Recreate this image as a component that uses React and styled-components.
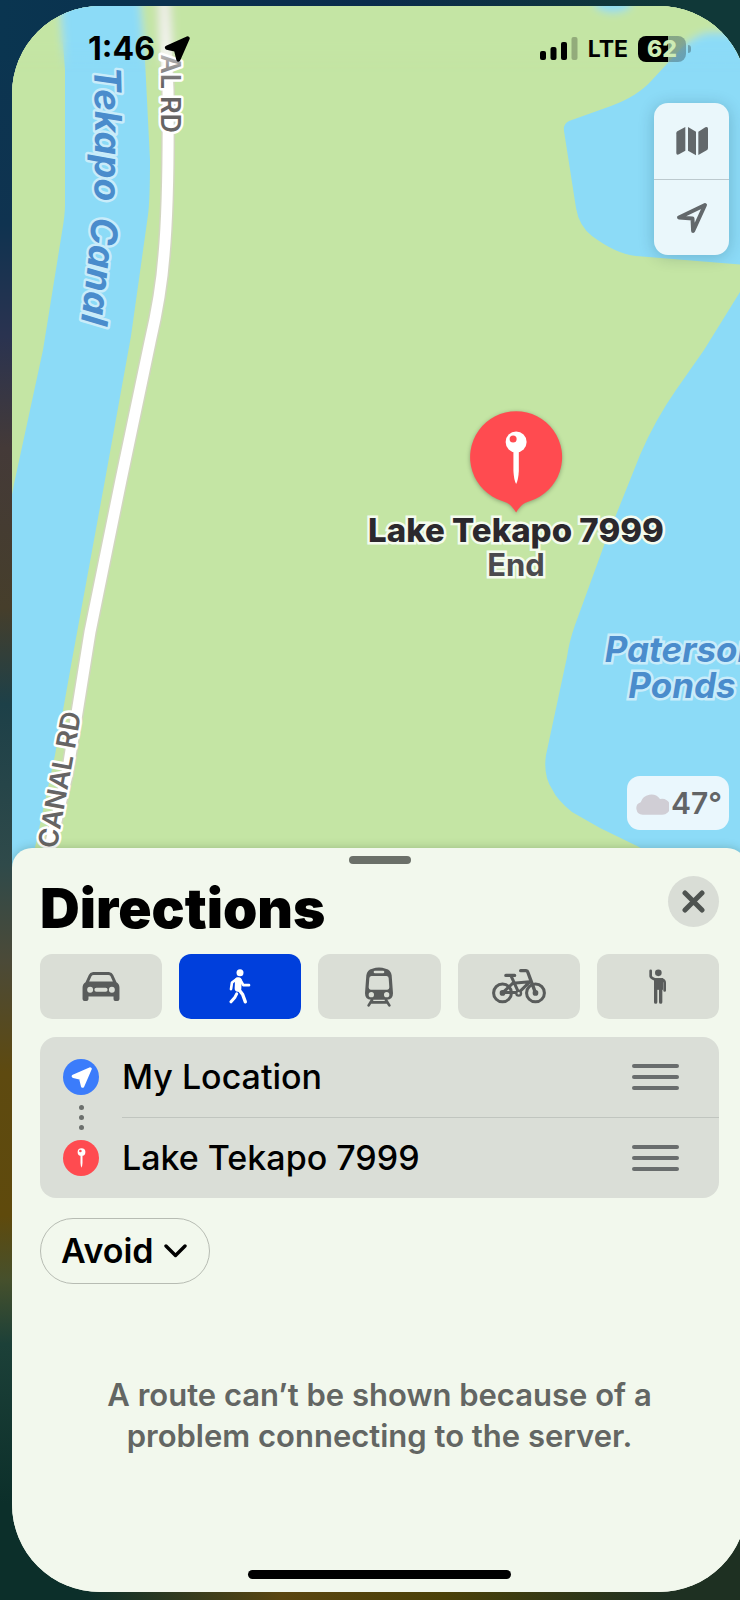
import React from "react";
import styled, { createGlobalStyle } from "styled-components";

const GlobalStyle = createGlobalStyle`
  *, *::before, *::after { box-sizing: border-box; }
  body {
    margin: 0;
    background: #0c2f2a;
    color: #000;
    font-family: Inter, "Liberation Sans", sans-serif;
  }
  button { font: inherit; color: inherit; border: 0; padding: 0; cursor: pointer; }
  h1, p, ol { margin: 0; padding: 0; }
  svg { display: block; }
`;

const Wallpaper = styled.div`
  min-height: 100vh;
  overflow: hidden;
  display: flex;
  padding: 6px 0 8px 12px;
  background:
    linear-gradient(90deg, #0a3550 0%, #0a2c4c 50%, #103838 90%) top / 100% 60px no-repeat,
    linear-gradient(90deg, #0c2f2a 12%, #5a4510 38%, #4a4008 60%, #1e3022 90%) bottom / 100% 60px no-repeat,
    linear-gradient(90deg, transparent 50%, #1e3022 50%) bottom / 100% 200px no-repeat,
    linear-gradient(90deg, transparent 50%, #103838 50%) top / 100% 200px no-repeat,
    linear-gradient(180deg, #0a3550 0%, #0f3350 14%, #2a3350 21%, #443a38 28%, #463e2b 38%,
      #1d4048 44%, #2f4a4a 54%, #4b4a38 60%, #5e4a10 67%, #5f4a0c 76%, #46502c 80%,
      #1c4038 84%, #0c2f2a 94%);
`;

const Phone = styled.main`
  flex: 1;
  min-width: 0;
  margin-right: -7px;
  display: flex;
  flex-direction: column;
  overflow: hidden;
  border-radius: 88px;
  background: #f2f8ed;
`;

const MapArea = styled.section`
  position: relative;
  flex: 1 0 500px;
  background: #c4e5a4;
  overflow: hidden;
`;

const MapDrawing = styled.svg`
  position: absolute;
  inset: 0;
  width: 100%;
  height: 100%;
`;

const WaterText = styled.text`
  font-size: 37px;
  font-style: italic;
  font-weight: 700;
  fill: #4a8ccc;
  stroke: #c9ecfa;
  stroke-width: 5px;
  stroke-linejoin: round;
  paint-order: stroke;
`;

const RoadText = styled.text`
  font-size: 27px;
  font-weight: 600;
  fill: ${(p) => (p.$faded ? "url(#label-fade)" : "#666464")};
  stroke: #fff;
  stroke-width: 5px;
  stroke-linejoin: round;
  paint-order: stroke;
`;

const StatusBar = styled.header`
  position: absolute;
  inset: 0 0 auto 0;
  padding: 27px 56px 0 76px;
  display: flex;
  justify-content: space-between;
  align-items: flex-start;
`;

const StatusGroup = styled.div`
  height: 32px;
  display: flex;
  align-items: center;
  gap: ${(p) => p.$gap}px;
`;

const Clock = styled.time`
  font-size: 32px;
  line-height: 32px;
  font-weight: 700;
`;

const Carrier = styled.span`
  font-size: 23px;
  line-height: 32px;
  font-weight: 700;
`;

const Battery = styled.div`
  width: 48px;
  height: 26px;
  border-radius: 8px;
  background: linear-gradient(90deg, #000 63%, rgba(60, 90, 100, 0.45) 63%);
  color: #cdebb4;
  font-size: 23px;
  line-height: 26px;
  font-weight: 800;
  text-align: center;
`;

const BatteryTip = styled.div`
  width: 3px;
  height: 8px;
  border-radius: 0 4px 4px 0;
  background: rgba(60, 90, 100, 0.45);
`;

const BatteryGroup = styled.div`
  display: flex;
  align-items: center;
  gap: 2px;
`;

const MapControls = styled.div`
  position: absolute;
  top: 97px;
  right: 18px;
  width: 75px;
  border-radius: 14px;
  background: #eaf7fb;
  box-shadow: 0 2px 16px rgba(0, 40, 60, 0.22);
  overflow: hidden;
`;

const MapControl = styled.button`
  width: 100%;
  height: 76px;
  display: grid;
  place-items: center;
  background: transparent;
  color: #62686b;
  & + & { border-top: 1px solid #bcc9ce; }
`;

const Weather = styled.div`
  position: absolute;
  right: 18px;
  bottom: 38px;
  width: 102px;
  height: 54px;
  padding: 0 7px 0 9px;
  display: flex;
  align-items: center;
  justify-content: space-between;
  border-radius: 13px;
  background: #eaf7fd;
  color: #626466;
  font-size: 30px;
  line-height: 36px;
  font-weight: 600;
`;

const Marker = styled.div`
  position: absolute;
  top: 405px;
  left: 504px;
  transform: translateX(-50%);
  display: flex;
  flex-direction: column;
  align-items: center;
  white-space: nowrap;
  font-weight: 800;
`;

const haloed = `
  -webkit-text-stroke: 5px #f4fbee;
  paint-order: stroke;
  stroke-linejoin: round;
`;

const MarkerTitle = styled.span`
  ${haloed}
  font-size: 33px;
  line-height: 36px;
  color: #2b282d;
`;

const MarkerNote = styled.span`
  ${haloed}
  font-size: 31px;
  line-height: 34px;
  font-weight: 700;
  color: #4b4a4d;
`;

const PondLabel = styled.p`
  position: absolute;
  top: 625px;
  left: 588px;
  width: 164px;
  text-align: center;
  font-size: 35px;
  line-height: 36px;
  font-style: italic;
  font-weight: 700;
  color: #4a8ccc;
  -webkit-text-stroke: 5px #c9ecfa;
  paint-order: stroke;
`;

const Sheet = styled.section`
  position: relative;
  margin-top: -20px;
  padding: 8px 28px 13px;
  display: flex;
  flex-direction: column;
  border-radius: 20px 20px 0 0;
  background: #f2f8ed;
  box-shadow: 0 0 10px rgba(30, 60, 30, 0.25);
`;

const Grabber = styled.div`
  align-self: center;
  width: 62px;
  height: 8px;
  border-radius: 4px;
  background: #6b7069;
`;

const SheetHeader = styled.div`
  margin-top: 12px;
  display: flex;
  justify-content: space-between;
  align-items: flex-start;
`;

const Title = styled.h1`
  font-size: 55px;
  line-height: 64px;
  font-weight: 900;
`;

const CloseButton = styled.button`
  width: 51px;
  height: 51px;
  border-radius: 50%;
  display: grid;
  place-items: center;
  background: #d9ddd6;
  color: #4e5350;
`;

const Modes = styled.div`
  margin-top: 14px;
  display: grid;
  grid-template-columns: repeat(5, 1fr);
  gap: 17px;
`;

const ModeButton = styled.button`
  height: 65px;
  border-radius: 12px;
  display: grid;
  place-items: center;
  background: ${(p) => (p.$active ? "#003fdc" : "#daded6")};
  color: ${(p) => (p.$active ? "#fff" : "#595c5b")};
`;

const StopsCard = styled.div`
  margin-top: 18px;
  padding-left: 23px;
  display: flex;
  gap: 23px;
  border-radius: 16px;
  background: #daded7;
`;

const Rail = styled.div`
  padding: 22px 0;
  display: flex;
  flex-direction: column;
  align-items: center;
  justify-content: space-between;
`;

const StopBadge = styled.span`
  width: 36px;
  height: 36px;
  border-radius: 50%;
  display: grid;
  place-items: center;
  background: ${(p) => p.$color};
`;

const Dots = styled.span`
  display: flex;
  flex-direction: column;
  gap: 5px;
`;

const Dot = styled.span`
  width: 5px;
  height: 5px;
  border-radius: 50%;
  background: #6c706d;
`;

const StopList = styled.ol`
  flex: 1;
  list-style: none;
`;

const Stop = styled.li`
  height: 80px;
  padding-right: 40px;
  display: flex;
  align-items: center;
  justify-content: space-between;
  font-size: 34px;
  line-height: 44px;
  font-weight: 500;
  & + & {
    height: 81px;
    border-top: 1px solid #c0c5bf;
  }
`;

const DragHandle = styled.button`
  width: 47px;
  display: flex;
  flex-direction: column;
  gap: 7px;
  background: transparent;
  cursor: grab;
`;

const HandleLine = styled.span`
  height: 4px;
  border-radius: 2px;
  background: #696d6d;
`;

const AvoidButton = styled.button`
  align-self: flex-start;
  margin-top: 20px;
  height: 66px;
  padding: 0 22px 0 20px;
  display: flex;
  align-items: center;
  gap: 10px;
  border: 1px solid #b7bcb3;
  border-radius: 33px;
  background: transparent;
  font-size: 34px;
  line-height: 44px;
  font-weight: 600;
`;

const Message = styled.p`
  align-self: center;
  max-width: 580px;
  margin-top: 90px;
  text-align: center;
  font-size: 31px;
  line-height: 41px;
  font-weight: 600;
  color: #636663;
`;

const HomeIndicator = styled.div`
  align-self: center;
  width: 263px;
  height: 9px;
  margin-top: 114px;
  border-radius: 5px;
  background: #000;
`;

function ArrowSolid({ size, color = "currentColor" }) {
  return (
    <svg width={size} height={size} viewBox="0 0 26 26" aria-hidden="true">
      <path
        d="M23.6 2.4 3 11.600l9 2.200 2.400 9.700z"
        fill={color}
        stroke={color}
        strokeWidth="4.2"
        strokeLinejoin="round"
      />
    </svg>
  );
}

function ArrowOutline() {
  return (
    <svg width="32" height="32" viewBox="0 0 32 32" fill="none" aria-hidden="true">
      <path
        d="M29 3 3 15.500l13.500 1 .6 12.500z"
        stroke="currentColor"
        strokeWidth="4"
        strokeLinejoin="round"
      />
    </svg>
  );
}

function MapIcon() {
  return (
    <svg width="32" height="30" viewBox="0 0 96 90" fill="currentColor" aria-hidden="true">
      <path d="M4 16 28 3v71L9 85Q1 88 1 81V22Q1 18 4 16z" />
      <path d="M36 3 60 17v71L36 74z" />
      <path d="M67 17 88 4q8-3 8 4v58q0 5-4 7L67 87z" />
    </svg>
  );
}

function SignalIcon() {
  return (
    <svg width="38" height="24" viewBox="0 0 38 24" aria-hidden="true">
      <rect x="0" y="14" width="6" height="9" rx="2" />
      <rect x="10.500" y="10" width="6" height="13" rx="2" />
      <rect x="21" y="5" width="6" height="18" rx="2" />
      <rect x="31.500" y="0" width="6" height="23" rx="2" opacity="0.25" />
    </svg>
  );
}

function CloudIcon() {
  return (
    <svg width="33" height="23" viewBox="0 0 99 69" fill="#d0ced5" aria-hidden="true">
      <path d="M20 68A19 19 0 0 1 14 31 33 33 0 0 1 72 21 24 24 0 1 1 76 68z" />
    </svg>
  );
}

function CarIcon() {
  return (
    <svg width="38" height="29" viewBox="0 0 112 88" fill="currentColor" fillRule="evenodd" aria-hidden="true">
      <path d="M9 31 19 9Q22 1 32 0H80Q90 1 93 9L103 31Q112 36 112 48V82Q112 88 106 88H99Q94 88 94 82V74H18V82Q18 88 12 88H6Q0 88 0 82V48Q0 36 9 31zM20 29H92L85 13Q83 9 78 9H34Q29 9 27 13zM23 45a9 9 0 1 0 0 18 9 9 0 0 0 0-18zM89 45a9 9 0 1 0 0 18 9 9 0 0 0 0-18zM42 48a6 6 0 0 0 0 12H70a6 6 0 0 0 0-12z" />
    </svg>
  );
}

function WalkIcon() {
  return (
    <svg
      width="22"
      height="35"
      viewBox="0 0 66 104"
      fill="none"
      stroke="currentColor"
      strokeLinecap="round"
      strokeLinejoin="round"
      aria-hidden="true"
    >
      <circle cx="33" cy="11" r="10.500" fill="currentColor" stroke="none" />
      <path d="M28 34 27 58" strokeWidth="20" />
      <path d="M24 29 9 40 6 60" strokeWidth="8" />
      <path d="M34 32 43 48H60" strokeWidth="8" />
      <path d="M29 60 41 76 49 98" strokeWidth="10" />
      <path d="M23 74 18 84 6 98" strokeWidth="9" />
    </svg>
  );
}

function TrainIcon() {
  return (
    <svg width="28" height="40" viewBox="0 0 84 118" fill="currentColor" aria-hidden="true">
      <path
        fillRule="evenodd"
        d="M22 4Q42-3 62 4 78 7 80 24L84 78Q84 97 66 97H18Q0 97 0 78L4 24Q6 7 22 4zM30 10a4 4 0 0 0 0 8H54a4 4 0 0 0 0-8zM19 26Q13 27 13 33L11 60Q11 67 17 67H67Q73 67 73 60L71 33Q71 27 65 26zM19 74a8 8 0 1 0 0 16 8 8 0 0 0 0-16zM65 74a8 8 0 1 0 0 16 8 8 0 0 0 0-16z"
      />
      <path
        d="M21 98 11 114M63 98 73 114M18 105H66"
        fill="none"
        stroke="currentColor"
        strokeWidth="8"
        strokeLinecap="round"
      />
    </svg>
  );
}

function BikeIcon() {
  return (
    <svg
      width="54"
      height="35"
      viewBox="0 0 160 104"
      fill="none"
      stroke="currentColor"
      strokeWidth="9"
      strokeLinecap="round"
      strokeLinejoin="round"
      aria-hidden="true"
    >
      <circle cx="31" cy="71" r="26.500" />
      <circle cx="129" cy="71" r="26.500" />
      <path d="M41 19H67M85 5H101Q105 5 106 9L129 71" strokeWidth="10" />
      <path d="M56 20 79 70M31 71 62 42 112 38 79 70H31" strokeWidth="9" />
      <circle cx="79" cy="72" r="7" fill="#daded6" strokeWidth="7" />
      <circle cx="31" cy="71" r="4" />
      <circle cx="129" cy="71" r="4" />
    </svg>
  );
}

function HailIcon() {
  return (
    <svg
      width="18"
      height="35"
      viewBox="0 0 54 104"
      fill="none"
      stroke="currentColor"
      strokeLinecap="round"
      strokeLinejoin="round"
      aria-hidden="true"
    >
      <circle cx="28" cy="11" r="10" fill="currentColor" stroke="none" />
      <path d="M5 5V21Q6 26 18 31H40Q47 33 47 41V64" strokeWidth="8" />
      <path d="M15 27H42V62H15z" fill="currentColor" stroke="none" />
      <path d="M20 60V99M35 60V99" strokeWidth="10" />
    </svg>
  );
}

function NeedleIcon({ width, height, dot }) {
  return (
    <svg width={width} height={height} viewBox="0 0 22 54" fill="#fff" aria-hidden="true">
      <circle cx="11" cy="11" r="10.500" />
      <circle cx="8" cy="8" r="3.500" fill={dot} />
      <path d="M8.300 20h5.400v20q-.5 9-2.700 13-2.200-4-2.700-13z" />
    </svg>
  );
}

const PinShape = styled.div`
  display: grid;
  justify-items: center;
  height: 101px;
`;

const PinBalloon = styled.svg`
  grid-area: 1 / 1;
  filter: drop-shadow(0 1px 2px rgba(0, 0, 0, 0.3));
`;

const PinGlyph = styled.div`
  grid-area: 1 / 1;
  z-index: 1;
  padding-top: 20px;
`;

function Pin() {
  return (
    <PinShape>
      <PinBalloon width="96" height="106" viewBox="0 0 96 106" aria-hidden="true">
        <path
          d="M48 101.500C45 97 42 92 34 90A46 46 0 1 1 62 90C54 92 51 97 48 101.500z"
          fill="#ff4b50"
        />
      </PinBalloon>
      <PinGlyph>
        <NeedleIcon width={22} height={54} dot="#ff4b50" />
      </PinGlyph>
    </PinShape>
  );
}

const ROAD = "M164 -10 164 0 168 90Q169 200 164 255 161 295 150 342L121 480 90 632 67 775 45 868";

function MapCanvas() {
  return (
    <MapDrawing viewBox="12 6 735 862" preserveAspectRatio="xMinYMin slice">
      <defs>
        <path id="canal-upper" d="M94 67Q96 140 94 205L90 235" />
        <path id="canal-lower" d="M92 217Q88 270 78 345" />
        <path id="road-upper" d="M161 -10 161 136" />
        <path id="road-lower" d="M53 872 60 830 82 710" />
        <linearGradient id="road-fade" gradientUnits="userSpaceOnUse" x1="0" y1="6" x2="0" y2="90">
          <stop offset="0" stopColor="#fff" stopOpacity="0.6" />
          <stop offset="1" stopColor="#fff" />
        </linearGradient>
        <linearGradient id="label-fade" gradientUnits="userSpaceOnUse" x1="0" y1="40" x2="0" y2="84">
          <stop offset="0" stopColor="#666464" stopOpacity="0.2" />
          <stop offset="1" stopColor="#666464" />
        </linearGradient>
        <linearGradient id="haze-fade" gradientUnits="userSpaceOnUse" x1="0" y1="40" x2="0" y2="72">
          <stop offset="0" stopColor="#fff" />
          <stop offset="1" stopColor="#fff" stopOpacity="0" />
        </linearGradient>
        <mask id="haze-mask" maskUnits="userSpaceOnUse" x="0" y="0" width="760" height="80">
          <rect width="760" height="80" fill="url(#haze-fade)" />
        </mask>
        <filter id="haze" filterUnits="userSpaceOnUse" x="-20" y="-40" width="800" height="160">
          <feGaussianBlur stdDeviation="4" />
        </filter>
      </defs>
      <g id="terrain">
        <rect x="-40" y="-60" width="840" height="960" fill="#c4e5a4" />
        <g fill="#8cdbf7">
          <path d="M60 -40V0L65 70 65 205Q65 215 62 232L43 350 14 484 0 560V880H28L55 755 72 660 105 480 131 336 148 215Q150 200 150 160L145 60 140 0V-40z" />
          <path d="M790 32 706 33Q690 38 678 52L652 80Q638 96 611 106L569 121Q563 124 564 131L576 208Q579 226 592 236 616 254 636 256L760 266z" />
          <path d="M760 262 740 292 704 350 676 390Q655 420 640 455L606 540 575 625Q569 642 567 657L546 755Q543 775 552 789 557 800 572 812L600 828 637 846 690 875H760z" />
          <ellipse cx="613" cy="3" rx="18" ry="9" />
        </g>
        <g fill="none">
          <path d={ROAD} stroke="#d2d6c0" strokeWidth="14" />
          <path d={ROAD} stroke="url(#road-fade)" strokeWidth="11" />
        </g>
      </g>
      <g mask="url(#haze-mask)">
        <use href="#terrain" filter="url(#haze)" />
      </g>
      <WaterText>
        <textPath href="#canal-upper">Tekapo</textPath>
      </WaterText>
      <WaterText>
        <textPath href="#canal-lower">Canal</textPath>
      </WaterText>
      <RoadText textAnchor="end" $faded>
        <textPath href="#road-upper" startOffset="98%">AL RD</textPath>
      </RoadText>
      <RoadText textAnchor="end">
        <textPath href="#road-lower" startOffset="98%">CANAL RD</textPath>
      </RoadText>
    </MapDrawing>
  );
}

const modes = [
  { label: "Drive", Icon: CarIcon },
  { label: "Walk", Icon: WalkIcon },
  { label: "Transit", Icon: TrainIcon },
  { label: "Cycle", Icon: BikeIcon },
  { label: "Ride share", Icon: HailIcon },
];

const stops = ["My Location", "Lake Tekapo 7999"];

export default function App() {
  const [mode, setMode] = React.useState("Walk");
  return (
    <>
      <GlobalStyle />
      <Wallpaper>
        <Phone>
          <MapArea>
            <MapCanvas />
            <PondLabel>
              Paterson
              <br />
              Ponds
            </PondLabel>
            <Marker>
              <Pin />
              <MarkerTitle>Lake Tekapo 7999</MarkerTitle>
              <MarkerNote>End</MarkerNote>
            </Marker>
            <StatusBar>
              <StatusGroup $gap={9}>
                <Clock>1:46</Clock>
                <ArrowSolid size={26} />
              </StatusGroup>
              <StatusGroup $gap={10}>
                <SignalIcon />
                <Carrier>LTE</Carrier>
                <BatteryGroup>
                  <Battery>62</Battery>
                  <BatteryTip />
                </BatteryGroup>
              </StatusGroup>
            </StatusBar>
            <MapControls>
              <MapControl aria-label="Map style">
                <MapIcon />
              </MapControl>
              <MapControl aria-label="Current location">
                <ArrowOutline />
              </MapControl>
            </MapControls>
            <Weather>
              <CloudIcon />
              47°
            </Weather>
          </MapArea>
          <Sheet>
            <Grabber />
            <SheetHeader>
              <Title>Directions</Title>
              <CloseButton aria-label="Close">
                <svg width="23" height="23" viewBox="0 0 23 23" aria-hidden="true">
                  <path
                    d="M3 3 20 20M20 3 3 20"
                    stroke="currentColor"
                    strokeWidth="5"
                    strokeLinecap="round"
                  />
                </svg>
              </CloseButton>
            </SheetHeader>
            <Modes>
              {modes.map(({ label, Icon }) => (
                <ModeButton
                  key={label}
                  aria-label={label}
                  aria-pressed={mode === label}
                  $active={mode === label}
                  onClick={() => setMode(label)}
                >
                  <Icon />
                </ModeButton>
              ))}
            </Modes>
            <StopsCard>
              <Rail>
                <StopBadge $color="#3b7cfb">
                  <ArrowSolid size={21} color="#fff" />
                </StopBadge>
                <Dots>
                  <Dot />
                  <Dot />
                  <Dot />
                </Dots>
                <StopBadge $color="#ff4b50">
                  <NeedleIcon width={9} height={20} dot="#ff4b50" />
                </StopBadge>
              </Rail>
              <StopList>
                {stops.map((name) => (
                  <Stop key={name}>
                    {name}
                    <DragHandle aria-label={`Move ${name}`}>
                      <HandleLine />
                      <HandleLine />
                      <HandleLine />
                    </DragHandle>
                  </Stop>
                ))}
              </StopList>
            </StopsCard>
            <AvoidButton>
              Avoid
              <svg width="23" height="14" viewBox="0 0 23 14" fill="none" aria-hidden="true">
                <path
                  d="M2 2 11.500 11.500 21 2"
                  stroke="currentColor"
                  strokeWidth="3.400"
                  strokeLinecap="round"
                  strokeLinejoin="round"
                />
              </svg>
            </AvoidButton>
            <Message>A route can’t be shown because of a problem connecting to the server.</Message>
            <HomeIndicator />
          </Sheet>
        </Phone>
      </Wallpaper>
    </>
  );
}
